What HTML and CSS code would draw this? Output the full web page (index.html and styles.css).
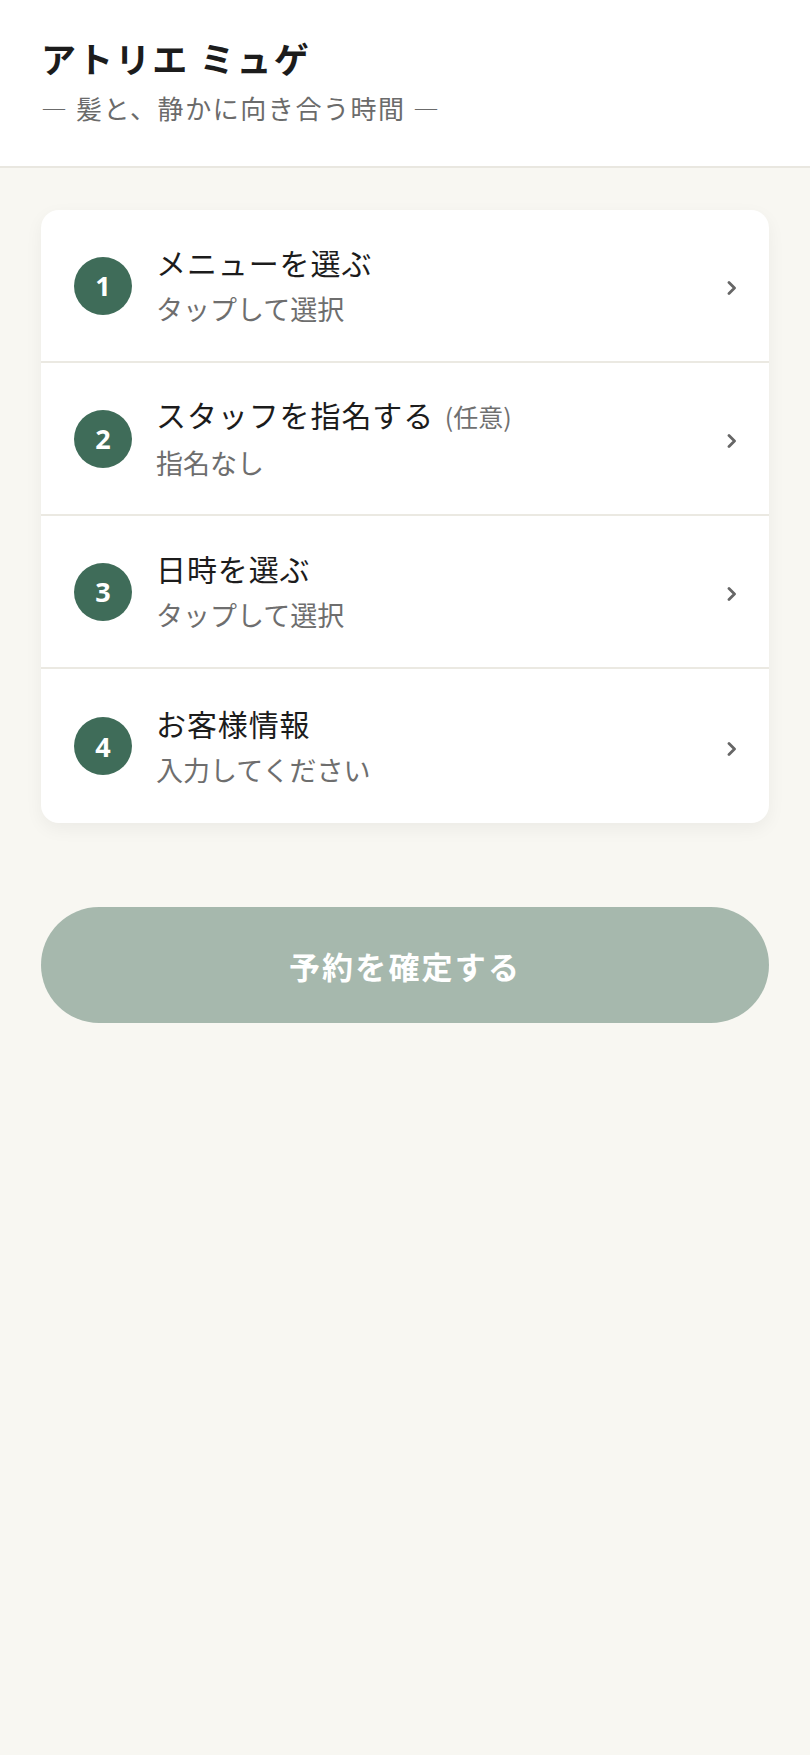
FILE: index.html
```html
<!DOCTYPE html>
<html lang="ja">
<head>
<meta charset="utf-8">
<title>アトリエ ミュゲ</title>
<link rel="stylesheet" href="styles.css">
</head>
<body>
<header class="header">
  <h1 class="brand">アトリエ ミュゲ</h1>
  <p class="tagline">— 髪と、静かに向き合う時間 —</p>
</header>
<main class="main">
  <section class="card">
    <div class="row">
      <span class="num">1</span>
      <div class="text">
        <div class="title">メニューを選ぶ</div>
        <div class="sub">タップして選択</div>
      </div>
      <span class="chev"><svg viewBox="0 0 10 14" width="10" height="14"><path d="M2 1.5 L7.5 7 L2 12.5" fill="none" stroke="#666" stroke-width="2.8" stroke-linecap="round" stroke-linejoin="round"/></svg></span>
    </div>
    <div class="row">
      <span class="num">2</span>
      <div class="text">
        <div class="title">スタッフを指名する <span class="opt">(任意)</span></div>
        <div class="sub">指名なし</div>
      </div>
      <span class="chev"><svg viewBox="0 0 10 14" width="10" height="14"><path d="M2 1.5 L7.5 7 L2 12.5" fill="none" stroke="#666" stroke-width="2.8" stroke-linecap="round" stroke-linejoin="round"/></svg></span>
    </div>
    <div class="row">
      <span class="num">3</span>
      <div class="text">
        <div class="title">日時を選ぶ</div>
        <div class="sub">タップして選択</div>
      </div>
      <span class="chev"><svg viewBox="0 0 10 14" width="10" height="14"><path d="M2 1.5 L7.5 7 L2 12.5" fill="none" stroke="#666" stroke-width="2.8" stroke-linecap="round" stroke-linejoin="round"/></svg></span>
    </div>
    <div class="row">
      <span class="num">4</span>
      <div class="text">
        <div class="title">お客様情報</div>
        <div class="sub">入力してください</div>
      </div>
      <span class="chev"><svg viewBox="0 0 10 14" width="10" height="14"><path d="M2 1.5 L7.5 7 L2 12.5" fill="none" stroke="#666" stroke-width="2.8" stroke-linecap="round" stroke-linejoin="round"/></svg></span>
    </div>
  </section>
  <button class="confirm" type="button">予約を確定する</button>
</main>
</body>
</html>
```

FILE: styles.css
```css
* { box-sizing: border-box; }
html, body { margin: 0; padding: 0; }
body {
  background: #f8f7f2;
  font-family: "Noto Sans CJK JP", "Noto Sans", sans-serif;
  color: #1c1c1c;
  min-height: 1755px;
}
.header {
  background: #ffffff;
  border-bottom: 2px solid #e9e7e0;
  padding: 35px 41px 0;
  height: 168px;
}
.brand {
  margin: 0;
  font-size: 35px;
  font-weight: 700;
  line-height: 46px;
  letter-spacing: 0.06em;
  color: #1c1c1c;
}
.tagline {
  margin: 11px 0 0;
  font-size: 26px;
  line-height: 32px;
  letter-spacing: 0.06em;
  color: #6b6b6b;
}
.main {
  padding: 42px 41px 0;
}
.card {
  background: #ffffff;
  border-radius: 18px;
  box-shadow: 0 6px 18px rgba(0, 0, 0, 0.05);
  overflow: hidden;
}
.row {
  display: flex;
  align-items: center;
  height: 153px;
  padding: 0 32px 0 33px;
  border-bottom: 2px solid #ebe9e2;
}
.row:last-child { border-bottom: none; height: 154px; }
.num {
  flex: none;
  width: 58px;
  height: 58px;
  border-radius: 50%;
  background: #3f6c59;
  color: #ffffff;
  font-family: "Noto Sans", "Noto Sans CJK JP", sans-serif;
  font-weight: 700;
  font-size: 27px;
  display: flex;
  align-items: center;
  justify-content: center;
  line-height: 1;
}
.text {
  flex: 1;
  margin-left: 24px;
  display: flex;
  flex-direction: column;
  gap: 9px;
}
.title {
  font-size: 30px;
  line-height: 38px;
  letter-spacing: 0.03em;
  color: #1c1c1c;
}
.opt {
  margin-left: 3px;
  font-size: 25px;
  color: #707070;
  letter-spacing: 0;
}
.sub {
  font-size: 27px;
  line-height: 38px;
  letter-spacing: 0;
  color: #6e6e6e;
}
.chev {
  flex: none;
  display: flex;
  align-items: center;
  margin-top: 5px;
}
.confirm {
  display: block;
  width: 100%;
  height: 116px;
  margin-top: 84px;
  border: none;
  border-radius: 58px;
  background: #a6b8ad;
  color: #ffffff;
  font-family: "Noto Sans CJK JP", sans-serif;
  font-weight: 700;
  font-size: 31px;
  letter-spacing: 0.07em;
  padding: 0;
}
```
